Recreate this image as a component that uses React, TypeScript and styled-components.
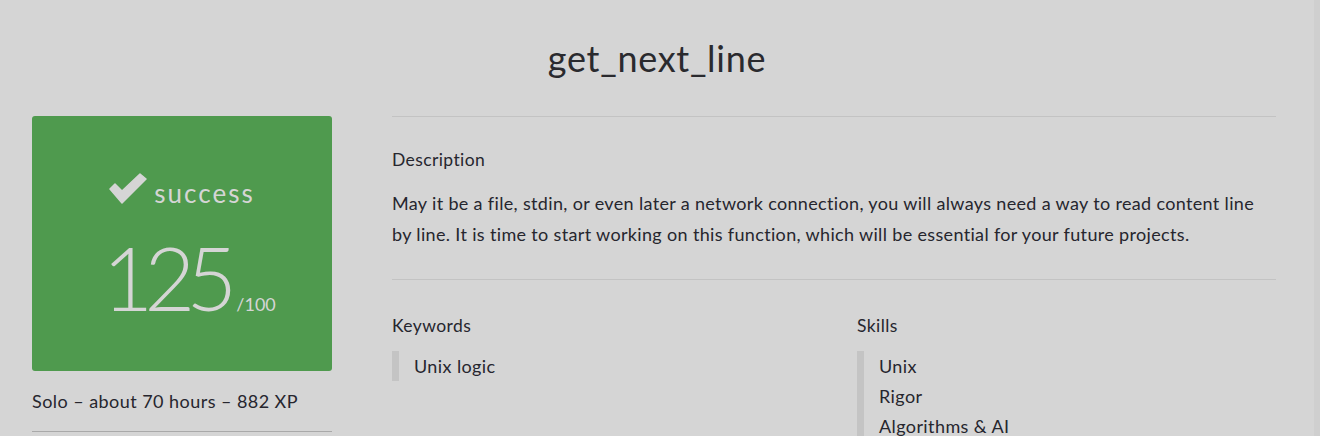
import React from "react";
import styled, { createGlobalStyle } from "styled-components";

const Global = createGlobalStyle`
  html, body { margin: 0; padding: 0; background: #d5d5d5; }
  body { font-family: Lato, "Noto Sans", sans-serif; color: #26262e; }
`;

const Page = styled.div`
  width: 1314px;
  height: 436px;
  overflow: hidden;
  border-right: 6px solid #cfcfcf;
  background: #d5d5d5;
`;

const Title = styled.h1`
  margin: 0;
  padding-top: 35px;
  height: 116px;
  box-sizing: border-box;
  text-align: center;
  font-weight: 400;
  font-size: 36px;
  line-height: 46px;
  letter-spacing: 0.7px;
  color: #2a2a2e;
`;

const Row = styled.div`
  display: flex;
  padding-left: 32px;
  gap: 60px;
`;

const Side = styled.div`
  width: 300px;
  flex: none;
`;

const ScoreCard = styled.div`
  height: 255px;
  background: #4f9a4e;
  border-radius: 3px;
  color: #d5d5d5;
  display: flex;
  flex-direction: column;
  align-items: center;
  padding-top: 60px;
  box-sizing: border-box;
`;

const Status = styled.div`
  display: flex;
  align-items: center;
  gap: 7px;
  font-size: 26px;
  line-height: 34px;
  letter-spacing: 2px;
  margin-left: 0;
`;

const Mark = styled.svg`
  display: block;
  width: 38px;
  height: 32px;
  margin-top: -8px;
`;

const Score = styled.div`
  display: flex;
  align-items: baseline;
  margin-top: 19px;
  margin-left: 14px;
`;

const Big = styled.span`
  font-size: 88px;
  line-height: 96px;
  font-weight: 300;
  letter-spacing: -9px;
`;

const Max = styled.span`
  font-size: 18px;
  margin-left: 8px;
`;

const Meta = styled.div`
  font-size: 18px;
  line-height: 24px;
  letter-spacing: 0.45px;
  padding: 18px 0 18px;
  border-bottom: 1px solid #a9a9a9;
`;

const Main = styled.div`
  flex: 1;
  max-width: 884px;
`;

const Section = styled.div<{ $top: number }>`
  border-top: 1px solid #c3c3c3;
  padding-top: ${(p) => p.$top}px;
`;

const Heading = styled.div`
  font-size: 17.5px;
  line-height: 24px;
  letter-spacing: 0.4px;
`;

const Paragraph = styled.p`
  margin: 16px 0 29px;
  font-size: 18px;
  line-height: 31px;
  letter-spacing: 0.34px;
`;

const Columns = styled.div`
  display: grid;
  grid-template-columns: 465px 1fr;
`;

const List = styled.ul`
  list-style: none;
  margin: 13px 0 0;
  padding: 0 0 0 15px;
  border-left: 7px solid #c4c4c4;
`;

const Item = styled.li`
  font-size: 18px;
  line-height: 30px;
  letter-spacing: 0.4px;
`;

export default function App() {
  return (
    <Page>
      <Global />
      <Title>get_next_line</Title>
      <Row>
        <Side>
          <ScoreCard>
            <Status>
              <Mark viewBox="0 0 38 32">
                <polygon
                  points="1,16 6,11 13,18 31,1 37,6 13,30"
                  fill="#d5d5d5"
                  stroke="#d5d5d5"
                  strokeWidth="1.5"
                  strokeLinejoin="round"
                />
              </Mark>
              success
            </Status>
            <Score>
              <Big>125</Big>
              <Max>/100</Max>
            </Score>
          </ScoreCard>
          <Meta>Solo – about 70 hours – 882 XP</Meta>
        </Side>
        <Main>
          <Section $top={31}>
            <Heading>Description</Heading>
            <Paragraph>
              May it be a file, stdin, or even later a network connection, you will always need a way to read content line by line. It is time to start working on this function, which will be essential for your future projects.
            </Paragraph>
          </Section>
          <Section $top={34}>
            <Columns>
              <div>
                <Heading>Keywords</Heading>
                <List>
                  <Item>Unix logic</Item>
                </List>
              </div>
              <div>
                <Heading>Skills</Heading>
                <List>
                  <Item>Unix</Item>
                  <Item>Rigor</Item>
                  <Item>Algorithms &amp; AI</Item>
                </List>
              </div>
            </Columns>
          </Section>
        </Main>
      </Row>
    </Page>
  );
}
